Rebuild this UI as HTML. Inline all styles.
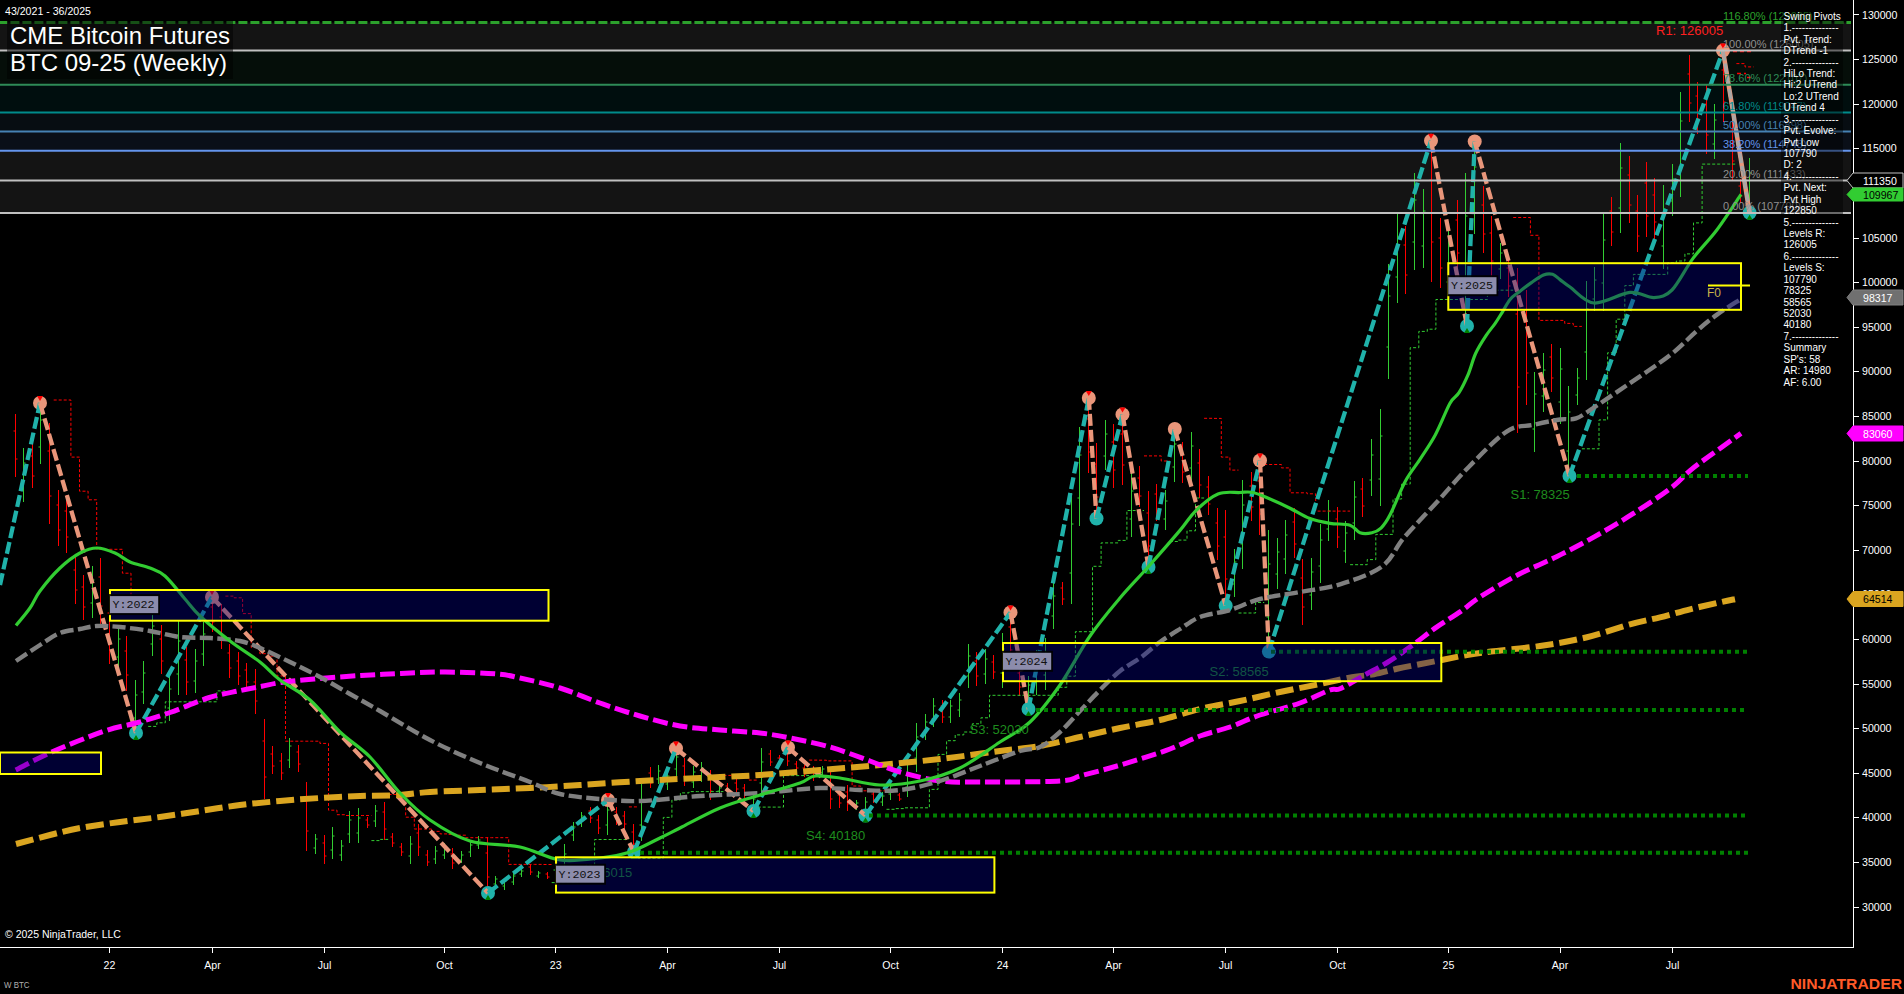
<!DOCTYPE html>
<html><head><meta charset="utf-8"><style>
html,body{margin:0;padding:0;background:#000;width:1904px;height:994px;overflow:hidden}
svg{position:absolute;left:0;top:0}
text{font-family:"Liberation Sans",sans-serif}
</style></head><body>
<svg width="1904" height="994" viewBox="0 0 1904 994">
<rect width="1904" height="994" fill="#000"/>
<rect x="0" y="22.5" width="1851" height="28.1" fill="#c0c0c0" fill-opacity="0.1"/>
<rect x="0" y="50.6" width="1851" height="34.2" fill="#2e8b57" fill-opacity="0.1"/>
<rect x="0" y="84.8" width="1851" height="27.7" fill="#008b8b" fill-opacity="0.1"/>
<rect x="0" y="112.5" width="1851" height="19.1" fill="#4682b4" fill-opacity="0.1"/>
<rect x="0" y="131.6" width="1851" height="19.1" fill="#6495ed" fill-opacity="0.1"/>
<rect x="0" y="150.7" width="1851" height="29.9" fill="#c0c0c0" fill-opacity="0.1"/>
<rect x="0" y="180.6" width="1851" height="32.3" fill="#c0c0c0" fill-opacity="0.1"/>
<g stroke-width="1" fill="none"><path d="M15.5,414V477M13.5,431h2M15.5,459h2" stroke="#ff0000"/><path d="M23.5,448V502M21.5,487h2M23.5,463h2" stroke="#32cd32"/><path d="M32.5,444V488M30.5,456h2M32.5,476h2" stroke="#ff0000"/><path d="M40.5,403V464M38.5,447h2M40.5,420h2" stroke="#32cd32"/><path d="M49.5,423V524M47.5,451h2M49.5,496h2" stroke="#ff0000"/><path d="M58.5,490V546M56.5,505h2M58.5,530h2" stroke="#ff0000"/><path d="M66.5,495V553M64.5,511h2M66.5,537h2" stroke="#ff0000"/><path d="M75.5,556V604M73.5,570h2M75.5,590h2" stroke="#ff0000"/><path d="M83.5,575V620M81.5,587h2M83.5,607h2" stroke="#ff0000"/><path d="M92.5,566V618M90.5,603h2M92.5,580h2" stroke="#32cd32"/><path d="M100.5,558V625M98.5,577h2M100.5,606h2" stroke="#ff0000"/><path d="M109.5,593V664M107.5,613h2M109.5,644h2" stroke="#ff0000"/><path d="M118.5,627V669M116.5,657h2M118.5,639h2" stroke="#32cd32"/><path d="M126.5,636V691M124.5,651h2M126.5,675h2" stroke="#ff0000"/><path d="M135.5,680V733M133.5,718h2M135.5,695h2" stroke="#32cd32"/><path d="M143.5,661V704M141.5,692h2M143.5,673h2" stroke="#32cd32"/><path d="M152.5,615V656M150.5,644h2M152.5,626h2" stroke="#32cd32"/><path d="M161.5,625V674M159.5,639h2M161.5,661h2" stroke="#ff0000"/><path d="M169.5,676V721M167.5,708h2M169.5,689h2" stroke="#32cd32"/><path d="M178.5,620V695M176.5,674h2M178.5,641h2" stroke="#32cd32"/><path d="M186.5,647V695M184.5,660h2M186.5,682h2" stroke="#ff0000"/><path d="M195.5,649V693M193.5,681h2M195.5,661h2" stroke="#32cd32"/><path d="M203.5,622V666M201.5,654h2M203.5,634h2" stroke="#32cd32"/><path d="M212.5,597V632M210.5,607h2M212.5,622h2" stroke="#ff0000"/><path d="M221.5,604V649M219.5,617h2M221.5,637h2" stroke="#ff0000"/><path d="M229.5,644V678M227.5,653h2M229.5,668h2" stroke="#ff0000"/><path d="M238.5,652V685M236.5,661h2M238.5,676h2" stroke="#ff0000"/><path d="M246.5,663V690M244.5,670h2M246.5,682h2" stroke="#ff0000"/><path d="M255.5,669V714M253.5,682h2M255.5,701h2" stroke="#ff0000"/><path d="M264.5,719V799M262.5,741h2M264.5,777h2" stroke="#ff0000"/><path d="M272.5,746V774M270.5,754h2M272.5,766h2" stroke="#ff0000"/><path d="M281.5,753V780M279.5,761h2M281.5,773h2" stroke="#ff0000"/><path d="M289.5,738V768M287.5,760h2M289.5,746h2" stroke="#32cd32"/><path d="M298.5,745V772M296.5,752h2M298.5,764h2" stroke="#ff0000"/><path d="M306.5,782V851M304.5,801h2M306.5,831h2" stroke="#ff0000"/><path d="M315.5,834V854M313.5,848h2M315.5,839h2" stroke="#32cd32"/><path d="M324.5,835V864M322.5,843h2M324.5,856h2" stroke="#ff0000"/><path d="M332.5,827V859M330.5,850h2M332.5,836h2" stroke="#32cd32"/><path d="M341.5,840V861M339.5,855h2M341.5,846h2" stroke="#32cd32"/><path d="M349.5,811V843M347.5,834h2M349.5,820h2" stroke="#32cd32"/><path d="M358.5,808V843M356.5,833h2M358.5,818h2" stroke="#32cd32"/><path d="M367.5,817V828M365.5,820h2M367.5,825h2" stroke="#ff0000"/><path d="M375.5,805V827M373.5,821h2M375.5,811h2" stroke="#32cd32"/><path d="M384.5,802V840M382.5,812h2M384.5,829h2" stroke="#ff0000"/><path d="M392.5,833V847M390.5,837h2M392.5,843h2" stroke="#ff0000"/><path d="M401.5,843V856M399.5,847h2M401.5,852h2" stroke="#ff0000"/><path d="M410.5,836V864M408.5,856h2M410.5,844h2" stroke="#32cd32"/><path d="M418.5,824V856M416.5,833h2M418.5,847h2" stroke="#ff0000"/><path d="M427.5,850V866M425.5,855h2M427.5,862h2" stroke="#ff0000"/><path d="M435.5,846V864M433.5,859h2M435.5,851h2" stroke="#32cd32"/><path d="M444.5,843V859M442.5,855h2M444.5,848h2" stroke="#32cd32"/><path d="M452.5,848V869M450.5,854h2M452.5,863h2" stroke="#ff0000"/><path d="M461.5,851V863M459.5,860h2M461.5,855h2" stroke="#32cd32"/><path d="M470.5,840V857M468.5,852h2M470.5,845h2" stroke="#32cd32"/><path d="M478.5,836V849M476.5,845h2M478.5,840h2" stroke="#32cd32"/><path d="M487.5,837V893M485.5,853h2M487.5,877h2" stroke="#ff0000"/><path d="M495.5,876V887M493.5,884h2M495.5,879h2" stroke="#32cd32"/><path d="M504.5,878V890M502.5,886h2M504.5,881h2" stroke="#32cd32"/><path d="M513.5,873V885M511.5,882h2M513.5,876h2" stroke="#32cd32"/><path d="M521.5,868V877M519.5,874h2M521.5,871h2" stroke="#32cd32"/><path d="M530.5,864V875M528.5,867h2M530.5,872h2" stroke="#ff0000"/><path d="M538.5,871V878M536.5,876h2M538.5,873h2" stroke="#32cd32"/><path d="M547.5,872V879M545.5,874h2M547.5,877h2" stroke="#ff0000"/><path d="M555.5,857V875M553.5,870h2M555.5,862h2" stroke="#32cd32"/><path d="M564.5,844V879M562.5,869h2M564.5,854h2" stroke="#32cd32"/><path d="M573.5,822V841M571.5,835h2M573.5,827h2" stroke="#32cd32"/><path d="M581.5,812V827M579.5,823h2M581.5,816h2" stroke="#32cd32"/><path d="M590.5,807V823M588.5,811h2M590.5,818h2" stroke="#ff0000"/><path d="M598.5,815V834M596.5,820h2M598.5,828h2" stroke="#ff0000"/><path d="M607.5,800V835M605.5,825h2M607.5,810h2" stroke="#32cd32"/><path d="M616.5,807V825M614.5,812h2M616.5,820h2" stroke="#ff0000"/><path d="M624.5,811V829M622.5,816h2M624.5,824h2" stroke="#ff0000"/><path d="M633.5,824V852M631.5,832h2M633.5,844h2" stroke="#ff0000"/><path d="M641.5,784V841M639.5,825h2M641.5,800h2" stroke="#32cd32"/><path d="M650.5,767V788M648.5,773h2M650.5,783h2" stroke="#ff0000"/><path d="M658.5,765V784M656.5,779h2M658.5,771h2" stroke="#32cd32"/><path d="M667.5,770V790M665.5,784h2M667.5,776h2" stroke="#32cd32"/><path d="M676.5,749V776M674.5,769h2M676.5,757h2" stroke="#32cd32"/><path d="M684.5,758V786M682.5,766h2M684.5,778h2" stroke="#ff0000"/><path d="M693.5,766V788M691.5,782h2M693.5,772h2" stroke="#32cd32"/><path d="M701.5,762V782M699.5,777h2M701.5,768h2" stroke="#32cd32"/><path d="M710.5,770V800M708.5,779h2M710.5,791h2" stroke="#ff0000"/><path d="M719.5,786V793M717.5,791h2M719.5,788h2" stroke="#32cd32"/><path d="M727.5,783V795M725.5,786h2M727.5,792h2" stroke="#ff0000"/><path d="M736.5,779V793M734.5,783h2M736.5,789h2" stroke="#ff0000"/><path d="M744.5,784V798M742.5,788h2M744.5,794h2" stroke="#ff0000"/><path d="M753.5,795V811M751.5,807h2M753.5,799h2" stroke="#32cd32"/><path d="M761.5,748V797M759.5,783h2M761.5,762h2" stroke="#32cd32"/><path d="M770.5,750V766M768.5,754h2M770.5,762h2" stroke="#ff0000"/><path d="M779.5,755V766M777.5,758h2M779.5,763h2" stroke="#ff0000"/><path d="M787.5,748V766M785.5,753h2M787.5,761h2" stroke="#ff0000"/><path d="M796.5,761V771M794.5,764h2M796.5,768h2" stroke="#ff0000"/><path d="M804.5,765V777M802.5,768h2M804.5,774h2" stroke="#ff0000"/><path d="M813.5,766V781M811.5,770h2M813.5,777h2" stroke="#ff0000"/><path d="M822.5,766V776M820.5,773h2M822.5,769h2" stroke="#32cd32"/><path d="M830.5,772V809M828.5,783h2M830.5,799h2" stroke="#ff0000"/><path d="M839.5,790V808M837.5,795h2M839.5,803h2" stroke="#ff0000"/><path d="M847.5,785V811M845.5,792h2M847.5,804h2" stroke="#ff0000"/><path d="M856.5,800V810M854.5,807h2M856.5,803h2" stroke="#32cd32"/><path d="M865.5,797V815M863.5,810h2M865.5,802h2" stroke="#32cd32"/><path d="M873.5,791V803M871.5,794h2M873.5,800h2" stroke="#ff0000"/><path d="M882.5,792V806M880.5,802h2M882.5,796h2" stroke="#32cd32"/><path d="M890.5,780V800M888.5,794h2M890.5,786h2" stroke="#32cd32"/><path d="M899.5,793V801M897.5,795h2M899.5,799h2" stroke="#ff0000"/><path d="M907.5,764V797M905.5,787h2M907.5,773h2" stroke="#32cd32"/><path d="M916.5,723V772M914.5,758h2M916.5,737h2" stroke="#32cd32"/><path d="M925.5,714V740M923.5,733h2M925.5,722h2" stroke="#32cd32"/><path d="M933.5,698V727M931.5,719h2M933.5,706h2" stroke="#32cd32"/><path d="M942.5,700V723M940.5,706h2M942.5,717h2" stroke="#ff0000"/><path d="M950.5,700V723M948.5,717h2M950.5,706h2" stroke="#32cd32"/><path d="M959.5,693V717M957.5,710h2M959.5,700h2" stroke="#32cd32"/><path d="M968.5,644V688M966.5,676h2M968.5,656h2" stroke="#32cd32"/><path d="M976.5,652V686M974.5,661h2M976.5,676h2" stroke="#ff0000"/><path d="M985.5,649V684M983.5,674h2M985.5,659h2" stroke="#32cd32"/><path d="M993.5,655V679M991.5,662h2M993.5,672h2" stroke="#ff0000"/><path d="M1002.5,633V688M1000.5,673h2M1002.5,649h2" stroke="#32cd32"/><path d="M1010.5,612V665M1008.5,627h2M1010.5,650h2" stroke="#ff0000"/><path d="M1019.5,665V696M1017.5,673h2M1019.5,687h2" stroke="#ff0000"/><path d="M1028.5,676V709M1026.5,700h2M1028.5,685h2" stroke="#32cd32"/><path d="M1036.5,650V695M1034.5,682h2M1036.5,663h2" stroke="#32cd32"/><path d="M1045.5,638V690M1043.5,675h2M1045.5,652h2" stroke="#32cd32"/><path d="M1053.5,583V629M1051.5,616h2M1053.5,596h2" stroke="#32cd32"/><path d="M1062.5,582V605M1060.5,588h2M1062.5,599h2" stroke="#ff0000"/><path d="M1071.5,493V604M1069.5,573h2M1071.5,524h2" stroke="#32cd32"/><path d="M1079.5,427V526M1077.5,498h2M1079.5,455h2" stroke="#32cd32"/><path d="M1088.5,398V473M1086.5,419h2M1088.5,452h2" stroke="#ff0000"/><path d="M1096.5,443V518M1094.5,464h2M1096.5,497h2" stroke="#ff0000"/><path d="M1105.5,420V470M1103.5,456h2M1105.5,434h2" stroke="#32cd32"/><path d="M1113.5,424V488M1111.5,442h2M1113.5,470h2" stroke="#ff0000"/><path d="M1122.5,414V485M1120.5,434h2M1122.5,465h2" stroke="#ff0000"/><path d="M1131.5,473V537M1129.5,519h2M1131.5,491h2" stroke="#32cd32"/><path d="M1139.5,466V507M1137.5,478h2M1139.5,496h2" stroke="#ff0000"/><path d="M1148.5,491V567M1146.5,513h2M1148.5,546h2" stroke="#ff0000"/><path d="M1156.5,484V521M1154.5,494h2M1156.5,511h2" stroke="#ff0000"/><path d="M1165.5,490V530M1163.5,519h2M1165.5,501h2" stroke="#32cd32"/><path d="M1174.5,429V482M1172.5,467h2M1174.5,444h2" stroke="#32cd32"/><path d="M1182.5,442V483M1180.5,454h2M1182.5,472h2" stroke="#ff0000"/><path d="M1191.5,432V482M1189.5,468h2M1191.5,446h2" stroke="#32cd32"/><path d="M1199.5,449V498M1197.5,463h2M1199.5,485h2" stroke="#ff0000"/><path d="M1208.5,476V515M1206.5,487h2M1208.5,504h2" stroke="#ff0000"/><path d="M1217.5,508V560M1215.5,523h2M1217.5,546h2" stroke="#ff0000"/><path d="M1225.5,510V606M1223.5,537h2M1225.5,579h2" stroke="#ff0000"/><path d="M1234.5,549V597M1232.5,584h2M1234.5,562h2" stroke="#32cd32"/><path d="M1242.5,480V569M1240.5,544h2M1242.5,505h2" stroke="#32cd32"/><path d="M1251.5,472V521M1249.5,486h2M1251.5,507h2" stroke="#ff0000"/><path d="M1259.5,460V535M1257.5,481h2M1259.5,514h2" stroke="#ff0000"/><path d="M1268.5,530V652M1266.5,617h2M1268.5,564h2" stroke="#32cd32"/><path d="M1277.5,538V589M1275.5,574h2M1277.5,552h2" stroke="#32cd32"/><path d="M1285.5,520V574M1283.5,559h2M1285.5,535h2" stroke="#32cd32"/><path d="M1294.5,508V558M1292.5,522h2M1294.5,544h2" stroke="#ff0000"/><path d="M1302.5,559V625M1300.5,578h2M1302.5,607h2" stroke="#ff0000"/><path d="M1311.5,558V610M1309.5,595h2M1311.5,572h2" stroke="#32cd32"/><path d="M1320.5,524V583M1318.5,566h2M1320.5,540h2" stroke="#32cd32"/><path d="M1328.5,500V541M1326.5,529h2M1328.5,511h2" stroke="#32cd32"/><path d="M1337.5,507V548M1335.5,519h2M1337.5,537h2" stroke="#ff0000"/><path d="M1345.5,521V563M1343.5,551h2M1345.5,533h2" stroke="#32cd32"/><path d="M1354.5,481V540M1352.5,523h2M1354.5,497h2" stroke="#32cd32"/><path d="M1362.5,478V517M1360.5,489h2M1362.5,506h2" stroke="#ff0000"/><path d="M1371.5,439V496M1369.5,480h2M1371.5,455h2" stroke="#32cd32"/><path d="M1380.5,409V506M1378.5,479h2M1380.5,436h2" stroke="#32cd32"/><path d="M1388.5,264V379M1386.5,347h2M1388.5,296h2" stroke="#32cd32"/><path d="M1397.5,212V303M1395.5,277h2M1397.5,237h2" stroke="#32cd32"/><path d="M1405.5,226V294M1403.5,245h2M1405.5,275h2" stroke="#ff0000"/><path d="M1414.5,173V270M1412.5,242h2M1414.5,200h2" stroke="#32cd32"/><path d="M1423.5,189V268M1421.5,246h2M1423.5,211h2" stroke="#32cd32"/><path d="M1431.5,141V282M1429.5,180h2M1431.5,242h2" stroke="#ff0000"/><path d="M1440.5,218V288M1438.5,238h2M1440.5,268h2" stroke="#ff0000"/><path d="M1448.5,223V305M1446.5,282h2M1448.5,246h2" stroke="#32cd32"/><path d="M1457.5,200V274M1455.5,220h2M1457.5,253h2" stroke="#ff0000"/><path d="M1465.5,173V326M1463.5,283h2M1465.5,216h2" stroke="#32cd32"/><path d="M1474.5,142V234M1472.5,208h2M1474.5,167h2" stroke="#32cd32"/><path d="M1483.5,186V253M1481.5,205h2M1483.5,234h2" stroke="#ff0000"/><path d="M1491.5,216V279M1489.5,233h2M1491.5,261h2" stroke="#ff0000"/><path d="M1500.5,243V279M1498.5,269h2M1500.5,253h2" stroke="#32cd32"/><path d="M1508.5,256V297M1506.5,268h2M1508.5,286h2" stroke="#ff0000"/><path d="M1517.5,268V433M1515.5,314h2M1517.5,387h2" stroke="#ff0000"/><path d="M1526.5,290V405M1524.5,322h2M1526.5,373h2" stroke="#ff0000"/><path d="M1534.5,372V452M1532.5,429h2M1534.5,394h2" stroke="#32cd32"/><path d="M1543.5,353V412M1541.5,396h2M1543.5,370h2" stroke="#32cd32"/><path d="M1551.5,344V392M1549.5,357h2M1551.5,378h2" stroke="#ff0000"/><path d="M1560.5,348V424M1558.5,402h2M1560.5,369h2" stroke="#32cd32"/><path d="M1568.5,386V476M1566.5,451h2M1568.5,412h2" stroke="#32cd32"/><path d="M1577.5,368V405M1575.5,395h2M1577.5,378h2" stroke="#32cd32"/><path d="M1586.5,281V380M1584.5,352h2M1586.5,309h2" stroke="#32cd32"/><path d="M1594.5,267V311M1592.5,299h2M1594.5,280h2" stroke="#32cd32"/><path d="M1603.5,212V311M1601.5,283h2M1603.5,240h2" stroke="#32cd32"/><path d="M1611.5,197V246M1609.5,211h2M1611.5,232h2" stroke="#ff0000"/><path d="M1620.5,143V233M1618.5,208h2M1620.5,168h2" stroke="#32cd32"/><path d="M1629.5,156V223M1627.5,175h2M1629.5,205h2" stroke="#ff0000"/><path d="M1637.5,195V252M1635.5,211h2M1637.5,236h2" stroke="#ff0000"/><path d="M1646.5,162V237M1644.5,183h2M1646.5,216h2" stroke="#ff0000"/><path d="M1654.5,178V239M1652.5,195h2M1654.5,222h2" stroke="#ff0000"/><path d="M1663.5,185V269M1661.5,246h2M1663.5,209h2" stroke="#32cd32"/><path d="M1672.5,164V216M1670.5,201h2M1672.5,179h2" stroke="#32cd32"/><path d="M1680.5,92V197M1678.5,167h2M1680.5,121h2" stroke="#32cd32"/><path d="M1689.5,55V122M1687.5,74h2M1689.5,103h2" stroke="#ff0000"/><path d="M1697.5,82V134M1695.5,96h2M1697.5,119h2" stroke="#ff0000"/><path d="M1706.5,85V154M1704.5,104h2M1706.5,135h2" stroke="#ff0000"/><path d="M1714.5,104V159M1712.5,144h2M1714.5,120h2" stroke="#32cd32"/><path d="M1723.5,51V122M1721.5,70h2M1723.5,102h2" stroke="#ff0000"/><path d="M1732.5,110V181M1730.5,130h2M1732.5,161h2" stroke="#ff0000"/><path d="M1740.5,179V203M1738.5,186h2M1740.5,196h2" stroke="#ff0000"/><path d="M1749.5,158V213M1747.5,197h2M1749.5,173h2" stroke="#32cd32"/></g>
<path d="M53.7,400.0 L62.3,400.0 L70.9,400.0 L70.9,457.1 L79.5,457.1 L79.5,491.2 L88.1,491.2 L88.1,499.8 L96.7,499.8 L96.7,549.3 L105.2,549.3 L113.8,549.3 L122.4,549.3 L122.4,573.2 L131.0,573.2 L131.0,604.4 L139.6,604.4 L148.2,604.4" stroke="#ff0000" stroke-width="1" fill="none" stroke-dasharray="3 2"/>
<path d="M148.2,726.4 L156.8,726.4 L156.8,722.8 L165.3,722.8 L165.3,701.8 L173.9,701.8 L182.5,701.8 L191.1,701.8 L199.7,701.8 L208.3,701.8 L216.9,701.8 L216.9,690.9 L225.4,690.9" stroke="#32cd32" stroke-width="1" fill="none" stroke-dasharray="3 2"/>
<path d="M225.4,596.1 L234.0,596.1 L234.0,597.8 L242.6,597.8 L242.6,613.6 L251.2,613.6 L251.2,647.6 L259.8,647.6 L259.8,653.7 L268.4,653.7 L268.4,656.1 L277.0,656.1 L277.0,675.9 L285.5,675.9 L285.5,741.2 L294.1,741.2 L302.7,741.2 L311.3,741.2 L319.9,741.2 L319.9,743.4 L328.5,743.4 L328.5,810.2 L337.0,810.2 L337.0,814.7 L345.6,814.7 L345.6,815.5 L354.2,815.5 L362.8,815.5 L371.4,815.5" stroke="#ff0000" stroke-width="1" fill="none" stroke-dasharray="3 2"/>
<path d="M371.4,840.6 L380.0,840.6 L380.0,839.4 L388.6,839.4" stroke="#32cd32" stroke-width="1" fill="none" stroke-dasharray="3 2"/>
<path d="M388.5,794.5 L397.1,794.5 L397.1,796.7 L405.7,796.7 L405.7,817.2 L414.3,817.2 L414.3,829.0 L422.9,829.0 L431.5,829.0 L431.5,831.4 L440.1,831.4 L440.1,833.9 L448.7,833.9 L448.7,834.4 L457.2,834.4 L457.2,835.2 L465.8,835.2 L465.8,837.7 L474.4,837.7 L483.0,837.7 L491.6,837.7 L500.2,837.7 L508.7,837.7 L508.7,864.4 L517.3,864.4 L525.9,864.4 L534.5,864.4 L543.1,864.4 L543.1,864.5 L551.7,864.5" stroke="#ff0000" stroke-width="1" fill="none" stroke-dasharray="3 2"/>
<path d="M551.7,882.6 L560.3,882.6 L568.8,882.6 L577.4,882.6 L577.4,872.4 L586.0,872.4 L586.0,865.0 L594.6,865.0 L594.6,839.5 L603.2,839.5 L611.8,839.5 L620.4,839.5 L628.9,839.5" stroke="#32cd32" stroke-width="1" fill="none" stroke-dasharray="3 2"/>
<path d="M628.9,806.9 L637.5,806.9" stroke="#ff0000" stroke-width="1" fill="none" stroke-dasharray="3 2"/>
<path d="M637.5,858.3 L646.1,858.3 L654.7,858.3 L663.3,858.3 L663.3,817.4 L671.9,817.4 L671.9,800.0 L680.4,800.0 L680.4,792.9 L689.0,792.9 L689.0,791.6 L697.6,791.6 L706.2,791.6 L714.8,791.6 L723.4,791.6" stroke="#32cd32" stroke-width="1" fill="none" stroke-dasharray="3 2"/>
<path d="M723.4,775.4 L732.0,775.4 L732.0,777.2 L740.5,777.2 L740.5,778.0 L749.1,778.0 L749.1,780.1 L757.7,780.1" stroke="#ff0000" stroke-width="1" fill="none" stroke-dasharray="3 2"/>
<path d="M757.7,807.1 L766.3,807.1 L774.9,807.1 L783.5,807.1 L783.5,775.6 L792.1,775.6 L800.6,775.6 L809.2,775.6" stroke="#32cd32" stroke-width="1" fill="none" stroke-dasharray="3 2"/>
<path d="M809.2,760.1 L817.8,760.1 L817.8,760.2 L826.4,760.2 L826.4,760.9 L835.0,760.9 L843.6,760.9 L852.1,760.9 L852.1,786.0 L860.7,786.0 L860.7,790.8 L869.3,790.8 L877.9,790.8 L886.5,790.8" stroke="#ff0000" stroke-width="1" fill="none" stroke-dasharray="3 2"/>
<path d="M886.5,809.3 L895.1,809.3 L895.1,808.6 L903.7,808.6 L903.7,807.8 L912.2,807.8 L920.8,807.8 L929.4,807.8 L929.4,789.4 L938.0,789.4 L938.0,754.4 L946.6,754.4 L946.6,740.7 L955.2,740.7 L955.2,734.9 L963.8,734.9 L963.8,732.0 L972.3,732.0 L972.3,723.8 L980.9,723.8 L980.9,717.8 L989.5,717.8 L989.5,695.3 L998.1,695.3 L1006.7,695.3 L1015.3,695.3 L1023.8,695.3 L1032.4,695.3 L1041.0,695.3 L1049.6,695.3 L1058.2,695.3 L1058.2,687.3 L1066.8,687.3 L1066.8,676.2 L1075.4,676.2 L1075.4,631.7 L1083.9,631.7 L1092.5,631.7 L1092.5,566.3 L1101.1,566.3 L1101.1,542.9 L1109.7,542.9 L1118.3,542.9 L1118.3,540.4 L1126.9,540.4 L1126.9,510.5 L1135.5,510.5 L1144.0,510.5" stroke="#32cd32" stroke-width="1" fill="none" stroke-dasharray="3 2"/>
<path d="M1144.0,455.9 L1152.6,455.9 L1161.2,455.9 L1161.2,461.0 L1169.8,461.0" stroke="#ff0000" stroke-width="1" fill="none" stroke-dasharray="3 2"/>
<path d="M1169.8,541.5 L1178.4,541.5 L1178.4,540.1 L1187.0,540.1 L1187.0,530.8 L1195.5,530.8 L1195.5,498.0 L1204.1,498.0" stroke="#32cd32" stroke-width="1" fill="none" stroke-dasharray="3 2"/>
<path d="M1204.1,418.3 L1212.7,418.3 L1212.7,418.4 L1221.3,418.4 L1221.3,457.1 L1229.9,457.1 L1229.9,470.1 L1238.5,470.1" stroke="#ff0000" stroke-width="1" fill="none" stroke-dasharray="3 2"/>
<path d="M1238.5,613.0 L1247.1,613.0 L1255.6,613.0 L1255.6,602.5 L1264.2,602.5" stroke="#32cd32" stroke-width="1" fill="none" stroke-dasharray="3 2"/>
<path d="M1264.2,464.5 L1272.8,464.5 L1281.4,464.5 L1281.4,467.9 L1290.0,467.9 L1290.0,492.8 L1298.6,492.8 L1307.2,492.8 L1307.2,493.8 L1315.7,493.8 L1315.7,511.1 L1324.3,511.1 L1332.9,511.1 L1341.5,511.1 L1350.1,511.1" stroke="#ff0000" stroke-width="1" fill="none" stroke-dasharray="3 2"/>
<path d="M1350.1,564.7 L1358.7,564.7 L1367.2,564.7 L1367.2,559.6 L1375.8,559.6 L1375.8,534.4 L1384.4,534.4 L1393.0,534.4 L1393.0,499.0 L1401.6,499.0 L1401.6,484.1 L1410.2,484.1 L1410.2,347.7 L1418.8,347.7 L1418.8,331.4 L1427.3,331.4 L1427.3,329.2 L1435.9,329.2 L1435.9,299.5 L1444.5,299.5 L1453.1,299.5 L1461.7,299.5 L1470.3,299.5 L1478.8,299.5 L1487.4,299.5 L1487.4,290.2 L1496.0,290.2 L1504.6,290.2 L1513.2,290.2" stroke="#32cd32" stroke-width="1" fill="none" stroke-dasharray="3 2"/>
<path d="M1513.2,217.5 L1521.8,217.5 L1530.4,217.5 L1530.4,235.3 L1538.9,235.3 L1538.9,320.4 L1547.5,320.4 L1556.1,320.4 L1564.7,320.4 L1564.7,323.4 L1573.3,323.4 L1573.3,326.4 L1581.9,326.4" stroke="#ff0000" stroke-width="1" fill="none" stroke-dasharray="3 2"/>
<path d="M1581.9,448.8 L1590.5,448.8 L1599.0,448.8 L1599.0,419.9 L1607.6,419.9 L1607.6,352.8 L1616.2,352.8 L1616.2,319.2 L1624.8,319.2 L1624.8,285.6 L1633.4,285.6 L1633.4,274.4 L1642.0,274.4 L1650.5,274.4 L1659.1,274.4 L1667.7,274.4 L1667.7,262.8 L1676.3,262.8 L1676.3,261.0 L1684.9,261.0 L1684.9,253.9 L1693.5,253.9 L1693.5,222.9 L1702.1,222.9 L1702.1,164.1 L1710.6,164.1 L1719.2,164.1 L1727.8,164.1 L1736.4,164.1" stroke="#32cd32" stroke-width="1" fill="none" stroke-dasharray="3 2"/>
<path d="M1736.4,63.6 L1745.0,63.6 L1745.0,66.9 L1753.6,66.9" stroke="#ff0000" stroke-width="1" fill="none" stroke-dasharray="3 2"/>
<path d="M1719,51.5H1751M1737,73.5H1746M1747,77.5H1753" stroke="#ff0000" stroke-width="1.5" stroke-dasharray="4 3" fill="none"/>
<circle cx="40" cy="403" r="7" fill="#e9967a"/>
<path d="M37,396h6l-3,5z" fill="#ff0000"/>
<circle cx="136" cy="733" r="7" fill="#20b2aa"/>
<path d="M133,740h6l-3,-5z" fill="#008000"/>
<circle cx="212" cy="597" r="7" fill="#e9967a"/>
<path d="M209,590h6l-3,5z" fill="#ff0000"/>
<circle cx="488" cy="893" r="7" fill="#20b2aa"/>
<path d="M485,900h6l-3,-5z" fill="#008000"/>
<circle cx="608" cy="800" r="7" fill="#e9967a"/>
<path d="M605,793h6l-3,5z" fill="#ff0000"/>
<circle cx="634" cy="852" r="7" fill="#20b2aa"/>
<path d="M631,859h6l-3,-5z" fill="#008000"/>
<circle cx="676" cy="748.5" r="7" fill="#e9967a"/>
<path d="M673,741.5h6l-3,5z" fill="#ff0000"/>
<circle cx="753.5" cy="811" r="7" fill="#20b2aa"/>
<path d="M750.5,818h6l-3,-5z" fill="#008000"/>
<circle cx="788" cy="747.5" r="7" fill="#e9967a"/>
<path d="M785,740.5h6l-3,5z" fill="#ff0000"/>
<circle cx="865.5" cy="815.5" r="7" fill="#20b2aa"/>
<path d="M862.5,822.5h6l-3,-5z" fill="#008000"/>
<circle cx="1010.5" cy="612.4" r="7" fill="#e9967a"/>
<path d="M1007.5,605.4h6l-3,5z" fill="#ff0000"/>
<circle cx="1028.5" cy="709" r="7" fill="#20b2aa"/>
<path d="M1025.5,716h6l-3,-5z" fill="#008000"/>
<circle cx="1088.8" cy="398" r="7" fill="#e9967a"/>
<path d="M1085.8,391h6l-3,5z" fill="#ff0000"/>
<circle cx="1096.5" cy="518.5" r="7" fill="#20b2aa"/>
<circle cx="1122.5" cy="414.4" r="7" fill="#e9967a"/>
<path d="M1119.5,407.4h6l-3,5z" fill="#ff0000"/>
<circle cx="1148.5" cy="567" r="7" fill="#20b2aa"/>
<path d="M1145.5,574h6l-3,-5z" fill="#008000"/>
<circle cx="1174.8" cy="429" r="7" fill="#e9967a"/>
<circle cx="1225.7" cy="605.7" r="7" fill="#20b2aa"/>
<circle cx="1260" cy="460.5" r="7" fill="#e9967a"/>
<path d="M1257,453.5h6l-3,5z" fill="#ff0000"/>
<circle cx="1268.9" cy="651.6" r="7" fill="#20b2aa"/>
<circle cx="1431" cy="140.8" r="7" fill="#e9967a"/>
<path d="M1428,133.8h6l-3,5z" fill="#ff0000"/>
<circle cx="1467" cy="326" r="7" fill="#20b2aa"/>
<path d="M1464,333h6l-3,-5z" fill="#008000"/>
<circle cx="1474.7" cy="141.5" r="7" fill="#e9967a"/>
<circle cx="1569.5" cy="476" r="7" fill="#20b2aa"/>
<path d="M1566.5,483h6l-3,-5z" fill="#008000"/>
<circle cx="1723" cy="50.6" r="7" fill="#e9967a"/>
<path d="M1720,43.6h6l-3,5z" fill="#ff0000"/>
<circle cx="1749.6" cy="212.8" r="7" fill="#20b2aa"/>
<path d="M1746.6,219.8h6l-3,-5z" fill="#008000"/>
<line x1="0" y1="585" x2="40" y2="403" stroke="#20b2aa" stroke-width="4.3" stroke-dasharray="12 4"/>
<line x1="40" y1="403" x2="136" y2="733" stroke="#e9967a" stroke-width="4.3" stroke-dasharray="12 4"/>
<line x1="136" y1="733" x2="212" y2="597" stroke="#20b2aa" stroke-width="4.3" stroke-dasharray="12 4"/>
<line x1="212" y1="597" x2="488" y2="893" stroke="#e9967a" stroke-width="4.3" stroke-dasharray="12 4"/>
<line x1="488" y1="893" x2="608" y2="800" stroke="#20b2aa" stroke-width="4.3" stroke-dasharray="12 4"/>
<line x1="608" y1="800" x2="634" y2="852" stroke="#e9967a" stroke-width="4.3" stroke-dasharray="12 4"/>
<line x1="634" y1="852" x2="676" y2="748.5" stroke="#20b2aa" stroke-width="4.3" stroke-dasharray="12 4"/>
<line x1="676" y1="748.5" x2="753.5" y2="811" stroke="#e9967a" stroke-width="4.3" stroke-dasharray="12 4"/>
<line x1="753.5" y1="811" x2="788" y2="747.5" stroke="#20b2aa" stroke-width="4.3" stroke-dasharray="12 4"/>
<line x1="788" y1="747.5" x2="865.5" y2="815.5" stroke="#e9967a" stroke-width="4.3" stroke-dasharray="12 4"/>
<line x1="865.5" y1="815.5" x2="1010.5" y2="612.4" stroke="#20b2aa" stroke-width="4.3" stroke-dasharray="12 4"/>
<line x1="1010.5" y1="612.4" x2="1028.5" y2="709" stroke="#e9967a" stroke-width="4.3" stroke-dasharray="12 4"/>
<line x1="1028.5" y1="709" x2="1088.8" y2="398" stroke="#20b2aa" stroke-width="4.3" stroke-dasharray="12 4"/>
<line x1="1088.8" y1="398" x2="1096.5" y2="518.5" stroke="#e9967a" stroke-width="4.3" stroke-dasharray="12 4"/>
<line x1="1096.5" y1="518.5" x2="1122.5" y2="414.4" stroke="#20b2aa" stroke-width="4.3" stroke-dasharray="12 4"/>
<line x1="1122.5" y1="414.4" x2="1148.5" y2="567" stroke="#e9967a" stroke-width="4.3" stroke-dasharray="12 4"/>
<line x1="1148.5" y1="567" x2="1174.8" y2="429" stroke="#20b2aa" stroke-width="4.3" stroke-dasharray="12 4"/>
<line x1="1174.8" y1="429" x2="1225.7" y2="605.7" stroke="#e9967a" stroke-width="4.3" stroke-dasharray="12 4"/>
<line x1="1225.7" y1="605.7" x2="1260" y2="460.5" stroke="#20b2aa" stroke-width="4.3" stroke-dasharray="12 4"/>
<line x1="1260" y1="460.5" x2="1268.9" y2="651.6" stroke="#e9967a" stroke-width="4.3" stroke-dasharray="12 4"/>
<line x1="1268.9" y1="651.6" x2="1431" y2="140.8" stroke="#20b2aa" stroke-width="4.3" stroke-dasharray="12 4"/>
<line x1="1431" y1="140.8" x2="1467" y2="326" stroke="#e9967a" stroke-width="4.3" stroke-dasharray="12 4"/>
<line x1="1467" y1="326" x2="1474.7" y2="141.5" stroke="#20b2aa" stroke-width="4.3" stroke-dasharray="12 4"/>
<line x1="1474.7" y1="141.5" x2="1569.5" y2="476" stroke="#e9967a" stroke-width="4.3" stroke-dasharray="12 4"/>
<line x1="1569.5" y1="476" x2="1723" y2="50.6" stroke="#20b2aa" stroke-width="4.3" stroke-dasharray="12 4"/>
<line x1="1723" y1="50.6" x2="1749.6" y2="212.8" stroke="#e9967a" stroke-width="4.5"/>
<line x1="1723" y1="50.6" x2="1749.6" y2="212.8" stroke="#a8a8a8" stroke-opacity="0.95" stroke-width="3.4" stroke-dasharray="10 3"/>
<path d="M16.0,844.0 C21.7,842.5 39.3,837.7 50.0,835.0 C60.7,832.3 68.3,830.2 80.0,828.0 C91.7,825.8 106.7,823.8 120.0,822.0 C133.3,820.2 146.7,818.8 160.0,817.0 C173.3,815.2 186.7,813.0 200.0,811.0 C213.3,809.0 226.7,806.7 240.0,805.0 C253.3,803.3 266.7,802.2 280.0,801.0 C293.3,799.8 306.7,798.8 320.0,798.0 C333.3,797.2 346.7,796.5 360.0,796.0 C373.3,795.5 388.3,795.7 400.0,795.0 C411.7,794.3 416.7,792.8 430.0,792.0 C443.3,791.2 463.3,790.7 480.0,790.0 C496.7,789.3 513.3,788.8 530.0,788.0 C546.7,787.2 561.7,786.2 580.0,785.0 C598.3,783.8 620.0,782.2 640.0,781.0 C660.0,779.8 680.0,779.0 700.0,778.0 C720.0,777.0 740.0,776.3 760.0,775.0 C780.0,773.7 800.0,771.7 820.0,770.0 C840.0,768.3 860.0,766.8 880.0,765.0 C900.0,763.2 920.0,761.3 940.0,759.0 C960.0,756.7 983.3,753.2 1000.0,751.0 C1016.7,748.8 1026.7,748.3 1040.0,746.0 C1053.3,743.7 1066.7,740.0 1080.0,737.0 C1093.3,734.0 1106.7,730.8 1120.0,728.0 C1133.3,725.2 1146.7,723.2 1160.0,720.0 C1173.3,716.8 1186.7,712.2 1200.0,709.0 C1213.3,705.8 1226.7,703.8 1240.0,701.0 C1253.3,698.2 1266.7,694.8 1280.0,692.0 C1293.3,689.2 1308.0,686.5 1320.0,684.0 C1332.0,681.5 1343.0,678.8 1352.0,677.2 C1361.0,675.6 1366.5,675.6 1374.0,674.2 C1381.5,672.8 1389.2,670.5 1397.0,668.8 C1404.8,667.1 1413.3,665.5 1421.0,664.0 C1428.7,662.5 1435.3,661.2 1443.0,659.7 C1450.7,658.2 1459.0,656.4 1467.0,655.0 C1475.0,653.6 1478.8,653.0 1491.0,651.5 C1503.2,650.0 1524.2,648.3 1540.0,646.0 C1555.8,643.7 1571.0,641.1 1586.0,637.5 C1601.0,633.9 1617.7,627.8 1630.0,624.4 C1642.3,621.0 1650.0,619.8 1660.0,617.3 C1670.0,614.8 1680.0,611.8 1690.0,609.3 C1700.0,606.8 1712.5,604.0 1720.0,602.3 C1727.5,600.6 1732.5,599.7 1735.0,599.2" stroke="#daa520" stroke-width="6" fill="none" stroke-dasharray="18 6"/>
<path d="M15.7,770.0 C21.8,767.0 37.6,758.2 52.4,751.7 C67.2,745.2 90.8,735.8 104.7,731.0 C118.6,726.2 125.1,726.1 136.0,723.0 C146.9,719.9 157.8,716.8 170.0,712.5 C182.2,708.2 197.7,701.2 209.4,697.5 C221.2,693.8 231.8,692.4 240.5,690.5 C249.2,688.6 255.1,687.6 261.8,686.3 C268.6,685.0 272.3,683.7 281.0,682.5 C289.7,681.3 300.7,680.2 314.0,679.0 C327.3,677.8 346.5,676.4 361.0,675.5 C375.5,674.6 387.0,674.0 401.0,673.4 C415.0,672.8 429.0,671.9 445.0,672.0 C461.0,672.1 484.5,673.0 497.0,674.0 C509.5,675.0 509.5,675.7 520.0,678.0 C530.5,680.3 546.7,683.8 560.0,688.0 C573.3,692.2 586.7,698.3 600.0,703.0 C613.3,707.7 626.7,712.2 640.0,716.0 C653.3,719.8 666.7,723.7 680.0,726.0 C693.3,728.3 706.7,728.8 720.0,730.0 C733.3,731.2 748.3,731.7 760.0,733.0 C771.7,734.3 778.3,735.7 790.0,738.0 C801.7,740.3 816.7,743.2 830.0,747.0 C843.3,750.8 858.3,756.8 870.0,761.0 C881.7,765.2 888.3,768.7 900.0,772.0 C911.7,775.3 926.7,779.3 940.0,781.0 C953.3,782.7 960.0,782.0 980.0,782.0 C1000.0,782.0 1043.3,782.0 1060.0,781.0 C1076.7,780.0 1071.7,778.2 1080.0,776.0 C1088.3,773.8 1100.0,770.8 1110.0,768.0 C1120.0,765.2 1130.0,762.2 1140.0,759.0 C1150.0,755.8 1160.0,752.8 1170.0,749.0 C1180.0,745.2 1190.0,739.7 1200.0,736.0 C1210.0,732.3 1220.0,730.5 1230.0,727.0 C1240.0,723.5 1248.3,719.0 1260.0,715.0 C1271.7,711.0 1288.3,707.2 1300.0,703.0 C1311.7,698.8 1323.3,692.4 1330.0,690.0 C1336.7,687.6 1334.3,691.1 1340.0,688.7 C1345.7,686.3 1356.0,679.9 1364.0,675.4 C1372.0,670.9 1379.9,667.0 1388.0,662.0 C1396.1,657.0 1404.4,651.0 1412.5,645.2 C1420.6,639.4 1428.5,632.7 1436.6,627.1 C1444.6,621.5 1453.6,616.4 1460.8,611.4 C1468.0,606.4 1470.5,603.1 1480.0,597.0 C1489.5,590.9 1505.2,581.5 1518.0,574.8 C1530.8,568.1 1543.7,563.1 1556.5,556.7 C1569.3,550.3 1582.0,543.8 1594.7,536.6 C1607.5,529.4 1620.3,521.8 1633.0,513.7 C1645.7,505.6 1661.5,495.2 1671.0,488.0 C1680.5,480.8 1683.7,475.9 1690.0,470.6 C1696.3,465.3 1700.5,462.5 1709.0,456.3 C1717.5,450.1 1735.7,437.2 1741.0,433.4" stroke="#ff00ff" stroke-width="5" fill="none" stroke-dasharray="15 5"/>
<path d="M16.0,661.0 C20.0,658.3 32.7,649.7 40.0,645.0 C47.3,640.3 53.3,635.7 60.0,633.0 C66.7,630.3 73.8,630.2 80.0,629.0 C86.2,627.8 90.3,626.3 97.0,626.0 C103.7,625.7 111.2,626.2 120.0,627.0 C128.8,627.8 140.0,629.3 150.0,631.0 C160.0,632.7 170.0,635.8 180.0,637.0 C190.0,638.2 200.0,637.3 210.0,638.0 C220.0,638.7 231.7,639.3 240.0,641.0 C248.3,642.7 251.7,644.5 260.0,648.0 C268.3,651.5 280.0,657.2 290.0,662.0 C300.0,666.8 310.0,671.7 320.0,677.0 C330.0,682.3 340.0,688.3 350.0,694.0 C360.0,699.7 366.7,703.3 380.0,711.0 C393.3,718.7 413.3,731.3 430.0,740.0 C446.7,748.7 463.3,756.0 480.0,763.0 C496.7,770.0 516.7,776.8 530.0,782.0 C543.3,787.2 548.3,791.2 560.0,794.0 C571.7,796.8 586.7,797.8 600.0,799.0 C613.3,800.2 623.3,801.5 640.0,801.0 C656.7,800.5 680.0,797.3 700.0,796.0 C720.0,794.7 740.0,794.3 760.0,793.0 C780.0,791.7 803.3,788.5 820.0,788.0 C836.7,787.5 846.7,789.7 860.0,790.0 C873.3,790.3 886.7,791.5 900.0,790.0 C913.3,788.5 926.7,785.0 940.0,781.0 C953.3,777.0 966.7,771.0 980.0,766.0 C993.3,761.0 1010.0,754.2 1020.0,751.0 C1030.0,747.8 1033.3,750.2 1040.0,747.0 C1046.7,743.8 1053.3,738.0 1060.0,732.0 C1066.7,726.0 1073.3,718.0 1080.0,711.0 C1086.7,704.0 1093.3,696.7 1100.0,690.0 C1106.7,683.3 1113.3,676.3 1120.0,671.0 C1126.7,665.7 1133.3,662.8 1140.0,658.0 C1146.7,653.2 1153.3,646.8 1160.0,642.0 C1166.7,637.2 1173.3,633.2 1180.0,629.0 C1186.7,624.8 1191.7,620.2 1200.0,617.0 C1208.3,613.8 1220.0,613.0 1230.0,610.0 C1240.0,607.0 1248.3,602.0 1260.0,599.0 C1271.7,596.0 1286.7,594.5 1300.0,592.0 C1313.3,589.5 1326.3,588.5 1340.0,584.3 C1353.7,580.0 1371.3,574.3 1382.0,566.5 C1392.7,558.7 1394.8,548.4 1404.0,537.6 C1413.2,526.9 1426.2,513.8 1437.0,502.0 C1447.8,490.2 1457.3,478.5 1469.0,466.7 C1480.7,454.9 1496.3,438.3 1507.0,431.3 C1517.7,424.3 1524.2,426.9 1533.0,424.9 C1541.8,422.9 1552.8,420.6 1560.0,419.5 C1567.2,418.4 1570.3,420.4 1576.0,418.4 C1581.7,416.4 1585.8,412.8 1594.0,407.5 C1602.2,402.2 1612.3,395.2 1625.0,386.5 C1637.7,377.8 1658.2,364.3 1670.0,355.2 C1681.8,346.1 1688.2,338.4 1696.0,331.6 C1703.8,324.8 1709.5,320.0 1717.0,314.6 C1724.5,309.2 1737.0,301.6 1741.0,299.0" stroke="#808080" stroke-width="4.4" fill="none" stroke-dasharray="13.2 4.4"/>
<path d="M16.0,625.5 C18.3,622.6 26.0,613.8 30.0,608.0 C34.0,602.2 35.0,597.7 40.0,591.0 C45.0,584.3 53.3,574.3 60.0,568.0 C66.7,561.7 73.8,556.3 80.0,553.0 C86.2,549.7 91.2,548.0 97.0,548.0 C102.8,548.0 109.5,550.7 115.0,553.0 C120.5,555.3 124.2,559.5 130.0,562.0 C135.8,564.5 144.2,565.7 150.0,568.0 C155.8,570.3 159.2,570.8 165.0,576.0 C170.8,581.2 179.2,592.3 185.0,599.0 C190.8,605.7 192.5,609.0 200.0,616.0 C207.5,623.0 220.0,633.3 230.0,641.0 C240.0,648.7 251.7,655.5 260.0,662.0 C268.3,668.5 271.7,673.7 280.0,680.0 C288.3,686.3 300.0,691.3 310.0,700.0 C320.0,708.7 330.0,722.5 340.0,732.0 C350.0,741.5 360.0,746.8 370.0,757.0 C380.0,767.2 390.0,782.5 400.0,793.0 C410.0,803.5 418.3,812.0 430.0,820.0 C441.7,828.0 455.0,836.5 470.0,841.0 C485.0,845.5 505.0,843.8 520.0,847.0 C535.0,850.2 546.7,858.2 560.0,860.0 C573.3,861.8 588.3,859.3 600.0,858.0 C611.7,856.7 620.0,855.3 630.0,852.0 C640.0,848.7 651.7,842.0 660.0,838.0 C668.3,834.0 670.0,833.0 680.0,828.0 C690.0,823.0 706.7,813.5 720.0,808.0 C733.3,802.5 746.7,799.2 760.0,795.0 C773.3,790.8 790.8,786.2 800.0,783.0 C809.2,779.8 808.3,776.8 815.0,776.0 C821.7,775.2 829.2,776.5 840.0,778.0 C850.8,779.5 866.7,784.5 880.0,785.0 C893.3,785.5 906.7,783.8 920.0,781.0 C933.3,778.2 946.7,774.5 960.0,768.0 C973.3,761.5 988.3,749.7 1000.0,742.0 C1011.7,734.3 1020.0,731.5 1030.0,722.0 C1040.0,712.5 1050.0,699.3 1060.0,685.0 C1070.0,670.7 1080.0,650.5 1090.0,636.0 C1100.0,621.5 1110.2,609.7 1120.0,598.0 C1129.8,586.3 1139.0,577.3 1149.0,566.0 C1159.0,554.7 1172.2,539.6 1180.0,530.4 C1187.8,521.2 1189.4,516.9 1195.7,510.8 C1202.0,504.7 1210.6,497.1 1218.0,494.0 C1225.4,490.9 1234.2,492.8 1240.0,492.5 C1245.8,492.2 1248.0,491.4 1253.0,492.5 C1258.0,493.6 1263.8,496.4 1270.0,499.0 C1276.2,501.6 1283.3,504.9 1290.0,508.2 C1296.7,511.5 1303.3,516.1 1310.0,518.6 C1316.7,521.1 1323.3,522.2 1330.0,523.3 C1336.7,524.4 1345.0,523.6 1350.0,525.2 C1355.0,526.8 1356.3,531.5 1360.0,532.7 C1363.7,534.0 1368.5,533.5 1372.0,532.7 C1375.5,532.0 1378.0,531.2 1381.0,528.2 C1384.0,525.2 1386.2,522.4 1390.2,514.6 C1394.2,506.8 1400.2,490.7 1405.2,481.4 C1410.2,472.1 1415.3,466.6 1420.3,458.8 C1425.3,451.0 1430.5,443.9 1435.4,434.7 C1440.4,425.4 1446.1,410.3 1450.0,403.3 C1453.9,396.3 1456.0,397.5 1459.0,392.7 C1462.0,387.9 1465.3,381.1 1468.1,374.6 C1470.9,368.1 1472.6,360.0 1475.6,353.5 C1478.6,347.0 1482.9,340.4 1486.2,335.4 C1489.5,330.4 1492.4,327.3 1495.2,323.3 C1498.0,319.3 1500.3,315.3 1502.8,311.3 C1505.3,307.3 1507.5,302.5 1510.3,299.2 C1513.1,295.9 1515.9,294.5 1519.4,291.7 C1522.9,288.9 1527.4,285.4 1531.4,282.6 C1535.4,279.8 1540.0,276.4 1543.5,275.0 C1547.0,273.6 1549.8,273.5 1552.6,274.3 C1555.3,275.1 1557.1,277.5 1560.0,279.6 C1562.9,281.7 1564.3,283.1 1570.0,287.0 C1575.7,290.9 1584.0,302.1 1594.0,303.0 C1604.0,303.9 1620.0,293.3 1630.0,292.4 C1640.0,291.5 1647.0,298.0 1654.0,297.6 C1661.0,297.2 1665.5,296.5 1672.0,290.0 C1678.5,283.5 1685.5,268.4 1693.0,258.4 C1700.5,248.3 1709.0,240.4 1717.0,229.7 C1725.0,219.0 1737.0,200.3 1741.0,194.4" stroke="#32cd32" stroke-width="3.2" fill="none"/>
<line x1="1577" y1="476" x2="1748" y2="476" stroke="#008000" stroke-width="4" stroke-dasharray="4 4"/>
<line x1="1271" y1="651.7" x2="1748" y2="651.7" stroke="#008000" stroke-width="4" stroke-dasharray="4 4"/>
<line x1="1036" y1="709.9" x2="1748" y2="709.9" stroke="#008000" stroke-width="4" stroke-dasharray="4 4"/>
<line x1="869" y1="815.5" x2="1748" y2="815.5" stroke="#008000" stroke-width="4" stroke-dasharray="4 4"/>
<line x1="640" y1="852.8" x2="1748" y2="852.8" stroke="#008000" stroke-width="4" stroke-dasharray="4 4"/>
<text x="1510.5" y="499.3" font-size="13" fill="#1e8c1e">S1: 78325</text>
<text x="1209.5" y="676" font-size="13" fill="#1e8c1e">S2: 58565</text>
<text x="969.5" y="733.5" font-size="13" fill="#1e8c1e">S3: 52030</text>
<text x="806" y="840" font-size="13" fill="#1e8c1e">S4: 40180</text>
<text x="573" y="877" font-size="13" fill="#1e8c1e">S5: 36015</text>
<rect x="0" y="752.5" width="101" height="21.5" fill="#000080" fill-opacity="0.4" stroke="#ffff00" stroke-width="2"/>
<rect x="110" y="590" width="438.5" height="30.700000000000045" fill="#000080" fill-opacity="0.4" stroke="#ffff00" stroke-width="2"/>
<rect x="109" y="594.1" width="51" height="21" fill="#000" fill-opacity="0.9"/>
<rect x="110" y="596.1" width="48.2" height="17" fill="#8c8cac"/>
<text x="112.6" y="608.2" style="font-family:Liberation Mono" font-size="11.6" fill="#101010" textLength="42" lengthAdjust="spacingAndGlyphs">Y:2022</text>
<rect x="556" y="857.3" width="438.4" height="35.30000000000007" fill="#000080" fill-opacity="0.4" stroke="#ffff00" stroke-width="2"/>
<rect x="555" y="863.7" width="51" height="21" fill="#000" fill-opacity="0.9"/>
<rect x="556" y="865.7" width="48.2" height="17" fill="#8c8cac"/>
<text x="558.6" y="877.8" style="font-family:Liberation Mono" font-size="11.6" fill="#101010" textLength="42" lengthAdjust="spacingAndGlyphs">Y:2023</text>
<rect x="1003" y="643" width="438.29999999999995" height="38.200000000000045" fill="#000080" fill-opacity="0.4" stroke="#ffff00" stroke-width="2"/>
<rect x="1002" y="650.8" width="51" height="21" fill="#000" fill-opacity="0.9"/>
<rect x="1003" y="652.8" width="48.2" height="17" fill="#8c8cac"/>
<text x="1005.6" y="664.9" style="font-family:Liberation Mono" font-size="11.6" fill="#101010" textLength="42" lengthAdjust="spacingAndGlyphs">Y:2024</text>
<rect x="1448.3" y="263.2" width="292.70000000000005" height="46.60000000000002" fill="#000080" fill-opacity="0.4" stroke="#ffff00" stroke-width="2"/>
<rect x="1447.3" y="275.2" width="51" height="21" fill="#000" fill-opacity="0.9"/>
<rect x="1448.3" y="277.2" width="48.2" height="17" fill="#8c8cac"/>
<text x="1450.8999999999999" y="289.3" style="font-family:Liberation Mono" font-size="11.6" fill="#101010" textLength="42" lengthAdjust="spacingAndGlyphs">Y:2025</text>
<line x1="0" y1="22.5" x2="1851" y2="22.5" stroke="#2ca02c" stroke-width="3" stroke-dasharray="9 3" stroke-dashoffset="1.6"/>
<line x1="0" y1="50.6" x2="1851" y2="50.6" stroke="#c0c0c0" stroke-width="2"/>
<line x1="0" y1="84.8" x2="1851" y2="84.8" stroke="#2e8b57" stroke-width="2"/>
<line x1="0" y1="112.5" x2="1851" y2="112.5" stroke="#008b8b" stroke-width="2"/>
<line x1="0" y1="131.6" x2="1851" y2="131.6" stroke="#4682b4" stroke-width="2"/>
<line x1="0" y1="150.7" x2="1851" y2="150.7" stroke="#6495ed" stroke-width="2"/>
<line x1="0" y1="180.6" x2="1851" y2="180.6" stroke="#c0c0c0" stroke-width="2"/>
<line x1="0" y1="212.9" x2="1851" y2="212.9" stroke="#c0c0c0" stroke-width="2"/>
<rect x="7" y="20" width="226" height="59" fill="#000" fill-opacity="0.5"/>
<text x="10" y="43.7" font-size="24" fill="#fff">CME Bitcoin Futures</text>
<text x="10" y="71" font-size="24" fill="#fff">BTC 09-25 (Weekly)</text>
<text x="5" y="15" font-size="10.6" fill="#fff">43/2021 - 36/2025</text>
<text x="1723" y="19.5" font-size="11" fill="#2ca02c">116.80% (129065)</text>
<text x="1723" y="47.6" font-size="11" fill="#909090">100.00% (126005)</text>
<text x="1723" y="81.8" font-size="11" fill="#2e8b57">78.60% (122107)</text>
<text x="1723" y="109.5" font-size="11" fill="#008b8b">61.80% (119047)</text>
<text x="1723" y="128.6" font-size="11" fill="#4682b4">50.00% (116898)</text>
<text x="1723" y="147.7" font-size="11" fill="#6495ed">38.20% (114748)</text>
<text x="1723" y="177.6" font-size="11" fill="#909090">20.00% (111433)</text>
<text x="1723" y="209.9" font-size="11" fill="#909090">0.00% (107790)</text>
<text x="1656" y="35" font-size="13" fill="#ff2020">R1: 126005</text>
<rect x="1781" y="5" width="62" height="388" fill="#000" fill-opacity="0.45"/>
<text x="1783.5" y="19.8" font-size="10" fill="#fff">Swing Pivots</text>
<text x="1783.5" y="31.2" font-size="10" fill="#fff">1.--------------</text>
<text x="1783.5" y="42.7" font-size="10" fill="#fff">Pvt. Trend:</text>
<text x="1783.5" y="54.1" font-size="10" fill="#fff">DTrend -1</text>
<text x="1783.5" y="65.5" font-size="10" fill="#fff">2.--------------</text>
<text x="1783.5" y="77.0" font-size="10" fill="#fff">HiLo Trend:</text>
<text x="1783.5" y="88.4" font-size="10" fill="#fff">Hi:2 UTrend</text>
<text x="1783.5" y="99.8" font-size="10" fill="#fff">Lo:2 UTrend</text>
<text x="1783.5" y="111.2" font-size="10" fill="#fff">UTrend 4</text>
<text x="1783.5" y="122.7" font-size="10" fill="#fff">3.--------------</text>
<text x="1783.5" y="134.1" font-size="10" fill="#fff">Pvt. Evolve:</text>
<text x="1783.5" y="145.5" font-size="10" fill="#fff">Pvt Low</text>
<text x="1783.5" y="157.0" font-size="10" fill="#fff">107790</text>
<text x="1783.5" y="168.4" font-size="10" fill="#fff">D: 2</text>
<text x="1783.5" y="179.8" font-size="10" fill="#fff">4.--------------</text>
<text x="1783.5" y="191.2" font-size="10" fill="#fff">Pvt. Next:</text>
<text x="1783.5" y="202.7" font-size="10" fill="#fff">Pvt High</text>
<text x="1783.5" y="214.1" font-size="10" fill="#fff">122850</text>
<text x="1783.5" y="225.5" font-size="10" fill="#fff">5.--------------</text>
<text x="1783.5" y="237.0" font-size="10" fill="#fff">Levels R:</text>
<text x="1783.5" y="248.4" font-size="10" fill="#fff">126005</text>
<text x="1783.5" y="259.8" font-size="10" fill="#fff">6.--------------</text>
<text x="1783.5" y="271.3" font-size="10" fill="#fff">Levels S:</text>
<text x="1783.5" y="282.7" font-size="10" fill="#fff">107790</text>
<text x="1783.5" y="294.1" font-size="10" fill="#fff">78325</text>
<text x="1783.5" y="305.6" font-size="10" fill="#fff">58565</text>
<text x="1783.5" y="317.0" font-size="10" fill="#fff">52030</text>
<text x="1783.5" y="328.4" font-size="10" fill="#fff">40180</text>
<text x="1783.5" y="339.8" font-size="10" fill="#fff">7.--------------</text>
<text x="1783.5" y="351.3" font-size="10" fill="#fff">Summary</text>
<text x="1783.5" y="362.7" font-size="10" fill="#fff">SP's: 58</text>
<text x="1783.5" y="374.1" font-size="10" fill="#fff">AR: 14980</text>
<text x="1783.5" y="385.6" font-size="10" fill="#fff">AF: 6.00</text>
<line x1="1708" y1="285.5" x2="1750" y2="285.5" stroke="#ffff00" stroke-width="2"/>
<text x="1707" y="296.5" font-size="12" fill="#c8b44a">F0</text>
<rect x="1853" y="0" width="51" height="994" fill="#000"/>
<rect x="0" y="948" width="1904" height="46" fill="#000"/>
<line x1="1853.5" y1="0" x2="1853.5" y2="948" stroke="#fff" stroke-width="1"/>
<line x1="0" y1="947.5" x2="1854" y2="947.5" stroke="#fff" stroke-width="1"/>
<line x1="1854" y1="907.5" x2="1859" y2="907.5" stroke="#fff"/>
<text x="1862" y="910.5" font-size="10.6" fill="#fff">30000</text>
<line x1="1854" y1="862.5" x2="1859" y2="862.5" stroke="#fff"/>
<text x="1862" y="865.9" font-size="10.6" fill="#fff">35000</text>
<line x1="1854" y1="817.5" x2="1859" y2="817.5" stroke="#fff"/>
<text x="1862" y="821.3" font-size="10.6" fill="#fff">40000</text>
<line x1="1854" y1="773.5" x2="1859" y2="773.5" stroke="#fff"/>
<text x="1862" y="776.7" font-size="10.6" fill="#fff">45000</text>
<line x1="1854" y1="728.5" x2="1859" y2="728.5" stroke="#fff"/>
<text x="1862" y="732.1" font-size="10.6" fill="#fff">50000</text>
<line x1="1854" y1="684.5" x2="1859" y2="684.5" stroke="#fff"/>
<text x="1862" y="687.5" font-size="10.6" fill="#fff">55000</text>
<line x1="1854" y1="639.5" x2="1859" y2="639.5" stroke="#fff"/>
<text x="1862" y="642.9" font-size="10.6" fill="#fff">60000</text>
<line x1="1854" y1="594.5" x2="1859" y2="594.5" stroke="#fff"/>
<text x="1862" y="598.3" font-size="10.6" fill="#fff">65000</text>
<line x1="1854" y1="550.5" x2="1859" y2="550.5" stroke="#fff"/>
<text x="1862" y="553.7" font-size="10.6" fill="#fff">70000</text>
<line x1="1854" y1="505.5" x2="1859" y2="505.5" stroke="#fff"/>
<text x="1862" y="509.1" font-size="10.6" fill="#fff">75000</text>
<line x1="1854" y1="461.5" x2="1859" y2="461.5" stroke="#fff"/>
<text x="1862" y="464.5" font-size="10.6" fill="#fff">80000</text>
<line x1="1854" y1="416.5" x2="1859" y2="416.5" stroke="#fff"/>
<text x="1862" y="419.9" font-size="10.6" fill="#fff">85000</text>
<line x1="1854" y1="371.5" x2="1859" y2="371.5" stroke="#fff"/>
<text x="1862" y="375.3" font-size="10.6" fill="#fff">90000</text>
<line x1="1854" y1="327.5" x2="1859" y2="327.5" stroke="#fff"/>
<text x="1862" y="330.7" font-size="10.6" fill="#fff">95000</text>
<line x1="1854" y1="282.5" x2="1859" y2="282.5" stroke="#fff"/>
<text x="1862" y="286.1" font-size="10.6" fill="#fff">100000</text>
<line x1="1854" y1="238.5" x2="1859" y2="238.5" stroke="#fff"/>
<text x="1862" y="241.5" font-size="10.6" fill="#fff">105000</text>
<line x1="1854" y1="193.5" x2="1859" y2="193.5" stroke="#fff"/>
<text x="1862" y="196.9" font-size="10.6" fill="#fff">110000</text>
<line x1="1854" y1="148.5" x2="1859" y2="148.5" stroke="#fff"/>
<text x="1862" y="152.3" font-size="10.6" fill="#fff">115000</text>
<line x1="1854" y1="104.5" x2="1859" y2="104.5" stroke="#fff"/>
<text x="1862" y="107.7" font-size="10.6" fill="#fff">120000</text>
<line x1="1854" y1="59.5" x2="1859" y2="59.5" stroke="#fff"/>
<text x="1862" y="63.1" font-size="10.6" fill="#fff">125000</text>
<line x1="1854" y1="14.5" x2="1859" y2="14.5" stroke="#fff"/>
<text x="1862" y="18.5" font-size="10.6" fill="#fff">130000</text>
<line x1="109.5" y1="948" x2="109.5" y2="953" stroke="#fff"/>
<text x="109.5" y="969" font-size="10.6" fill="#fff" text-anchor="middle">22</text>
<line x1="212.5" y1="948" x2="212.5" y2="953" stroke="#fff"/>
<text x="212.5" y="969" font-size="10.6" fill="#fff" text-anchor="middle">Apr</text>
<line x1="324.5" y1="948" x2="324.5" y2="953" stroke="#fff"/>
<text x="324.5" y="969" font-size="10.6" fill="#fff" text-anchor="middle">Jul</text>
<line x1="444.5" y1="948" x2="444.5" y2="953" stroke="#fff"/>
<text x="444.5" y="969" font-size="10.6" fill="#fff" text-anchor="middle">Oct</text>
<line x1="555.5" y1="948" x2="555.5" y2="953" stroke="#fff"/>
<text x="555.7" y="969" font-size="10.6" fill="#fff" text-anchor="middle">23</text>
<line x1="667.5" y1="948" x2="667.5" y2="953" stroke="#fff"/>
<text x="667.5" y="969" font-size="10.6" fill="#fff" text-anchor="middle">Apr</text>
<line x1="779.5" y1="948" x2="779.5" y2="953" stroke="#fff"/>
<text x="779.4" y="969" font-size="10.6" fill="#fff" text-anchor="middle">Jul</text>
<line x1="890.5" y1="948" x2="890.5" y2="953" stroke="#fff"/>
<text x="890.6" y="969" font-size="10.6" fill="#fff" text-anchor="middle">Oct</text>
<line x1="1002.5" y1="948" x2="1002.5" y2="953" stroke="#fff"/>
<text x="1002.6" y="969" font-size="10.6" fill="#fff" text-anchor="middle">24</text>
<line x1="1113.5" y1="948" x2="1113.5" y2="953" stroke="#fff"/>
<text x="1113.6" y="969" font-size="10.6" fill="#fff" text-anchor="middle">Apr</text>
<line x1="1225.5" y1="948" x2="1225.5" y2="953" stroke="#fff"/>
<text x="1225.5" y="969" font-size="10.6" fill="#fff" text-anchor="middle">Jul</text>
<line x1="1337.5" y1="948" x2="1337.5" y2="953" stroke="#fff"/>
<text x="1337.5" y="969" font-size="10.6" fill="#fff" text-anchor="middle">Oct</text>
<line x1="1448.5" y1="948" x2="1448.5" y2="953" stroke="#fff"/>
<text x="1448.5" y="969" font-size="10.6" fill="#fff" text-anchor="middle">25</text>
<line x1="1560.5" y1="948" x2="1560.5" y2="953" stroke="#fff"/>
<text x="1560" y="969" font-size="10.6" fill="#fff" text-anchor="middle">Apr</text>
<line x1="1672.5" y1="948" x2="1672.5" y2="953" stroke="#fff"/>
<text x="1672.5" y="969" font-size="10.6" fill="#fff" text-anchor="middle">Jul</text>
<text x="5" y="938" font-size="10.5" fill="#fff">© 2025 NinjaTrader, LLC</text>
<text x="4" y="988" font-size="9.6" fill="#b0b0b0" textLength="25.5" lengthAdjust="spacingAndGlyphs">W BTC</text>
<text x="1790.5" y="988.8" font-size="15.4" font-weight="bold" fill="#ff5a28" textLength="111.5" lengthAdjust="spacingAndGlyphs">NINJATRADER</text>
<path d="M1847,180.5 L1853,173 H1903 V188 H1853 Z" fill="#000" stroke="#c0c0c0" stroke-width="1"/>
<text x="1863" y="184.5" font-size="10.6" fill="#fff">111350</text>
<path d="M1847,194.5 L1853,188 H1903 V201 H1853 Z" fill="#32cd32" stroke="#32cd32" stroke-width="1"/>
<text x="1863" y="198.5" font-size="10.6" fill="#000">109967</text>
<path d="M1847,297.5 L1853,290 H1903 V305 H1853 Z" fill="#707070" stroke="#808080" stroke-width="1"/>
<text x="1863" y="301.5" font-size="10.6" fill="#fff">98317</text>
<path d="M1847,433.5 L1853,426 H1903 V441 H1853 Z" fill="#ff00ff" stroke="#ff00ff" stroke-width="1"/>
<text x="1863" y="437.5" font-size="10.6" fill="#fff">83060</text>
<path d="M1847,599.0 L1853,591.5 H1903 V606.5 H1853 Z" fill="#daa520" stroke="#daa520" stroke-width="1"/>
<text x="1863" y="603.0" font-size="10.6" fill="#000">64514</text>
</svg>
</body></html>
